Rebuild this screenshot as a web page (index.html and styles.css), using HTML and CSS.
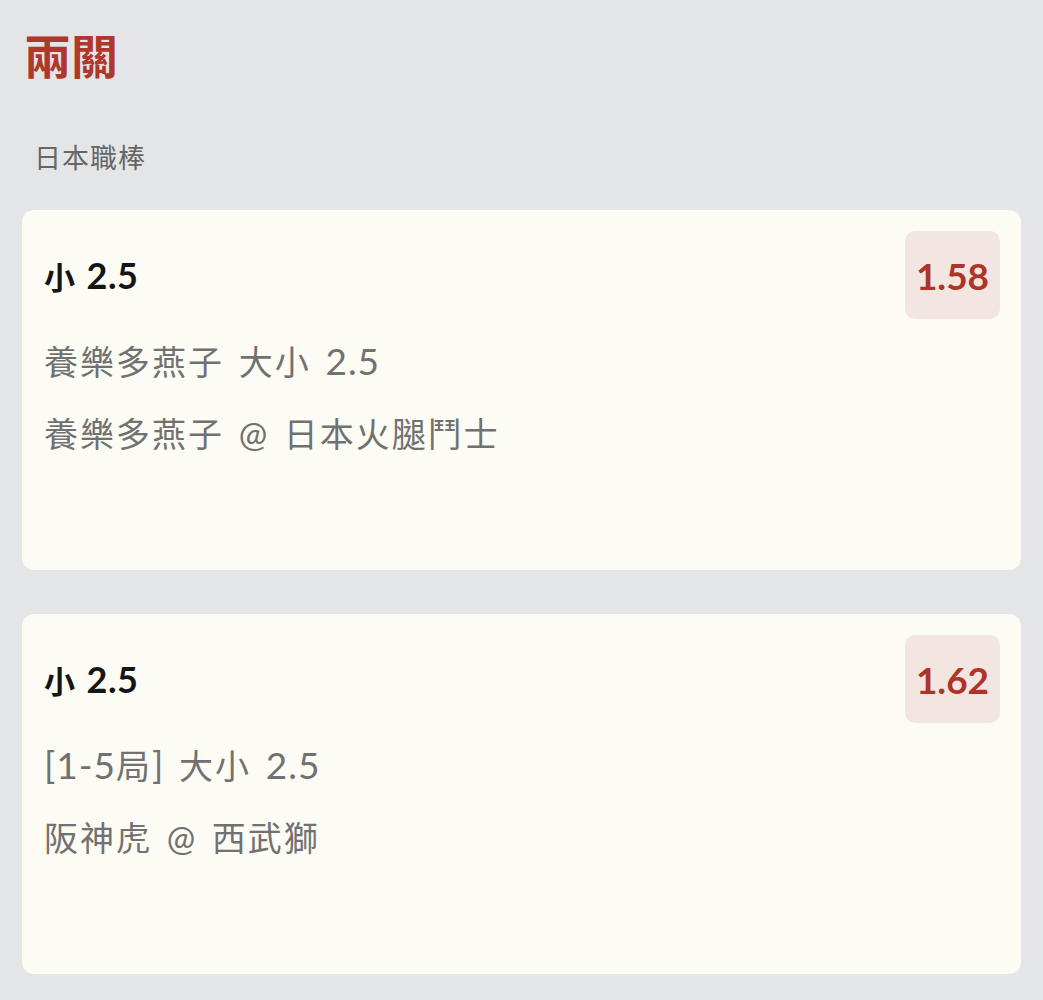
FILE: index.html
```html
<!DOCTYPE html>
<html lang="zh-Hant">
<head>
    <meta charset="UTF-8">
    <meta name="viewport" content="width=device-width, initial-scale=1.0">
    <title>兩關</title>
    <link rel="stylesheet" href="styles.css">
</head>
<body>
    <div class="page">
        <h1 class="title">兩關</h1>
        <div class="league">日本職棒</div>

        <div class="card">
            <div class="card-head">
                <div class="pick">小 <span class="num">2.5</span></div>
                <div class="odds">1.58</div>
            </div>
            <div class="line">養樂多燕子 大小 <span class="num">2.5</span></div>
            <div class="line">養樂多燕子 @ 日本火腿鬥士</div>
        </div>

        <div class="card">
            <div class="card-head">
                <div class="pick">小 <span class="num">2.5</span></div>
                <div class="odds">1.62</div>
            </div>
            <div class="line"><span class="num">[1-5</span>局<span class="num">]</span> 大小 <span class="num">2.5</span></div>
            <div class="line">阪神虎 @ 西武獅</div>
        </div>
    </div>
</body>
</html>
```

FILE: styles.css
```css
body {
    margin: 0;
    padding: 0;
    background-color: #e4e5e7;
    font-family: Lato, "Noto Sans CJK TC", sans-serif;
}

.page {
    padding: 26px 22px 0 22px;
}

.title {
    margin: 0 0 0 2px;
    font-size: 47px;
    line-height: 60px;
    font-weight: 700;
    color: #b0372c;
}

.league {
    margin: 54px 0 34px 12px;
    font-size: 27px;
    line-height: 36px;
    letter-spacing: 1px;
    color: #666;
}

.card {
    background-color: #fcfcf4;
    border-radius: 12px;
    height: 360px;
    box-sizing: border-box;
    padding: 21px 21px 0 22px;
    margin-bottom: 44px;
}

.card-head {
    display: flex;
    justify-content: space-between;
    align-items: center;
    margin-bottom: 6px;
}

.pick {
    font-size: 31px;
    font-weight: 700;
    word-spacing: 4px;
    color: #151515;
}

.pick .num {
    font-size: 36px;
    letter-spacing: 0.5px;
}

.odds {
    width: 95px;
    height: 88px;
    border-radius: 10px;
    background-color: #f3e6e1;
    color: #ae3328;
    font-size: 37px;
    font-weight: 700;
    display: flex;
    align-items: center;
    justify-content: center;
}

.line {
    font-size: 34px;
    line-height: 72px;
    letter-spacing: 2px;
    word-spacing: 4px;
    color: #717171;
}

.line .num {
    font-size: 37px;
    letter-spacing: 1px;
}
```
